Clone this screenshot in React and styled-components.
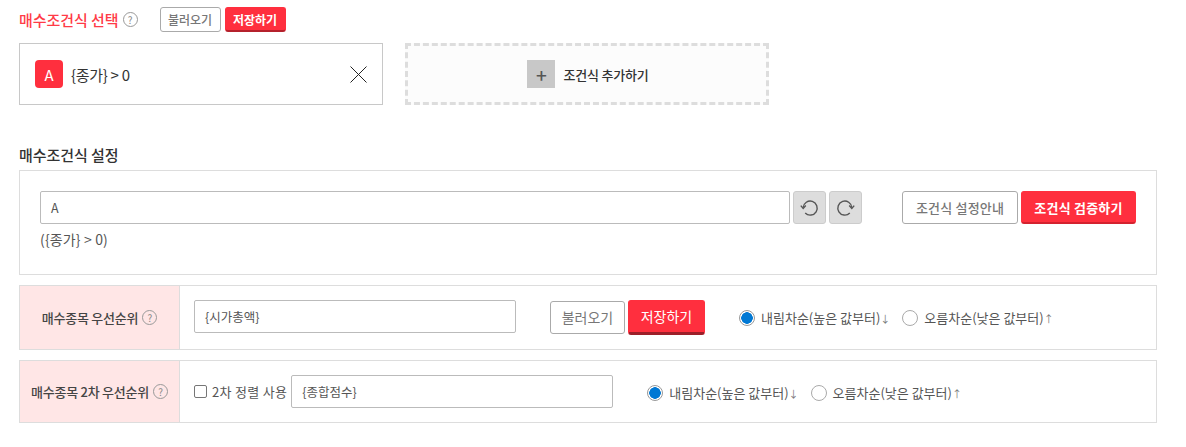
import React from 'react';
import styled, { createGlobalStyle } from 'styled-components';

const GlobalStyle = createGlobalStyle`
  html, body {
    margin: 0;
    padding: 0;
    background: #fff;
  }
  body {
    font-family: "Noto Sans CJK KR", "Noto Sans", sans-serif;
    color: #333;
  }
  * { box-sizing: border-box; }
`;

const Page = styled.div`
  width: 1186px;
  height: 447px;
  padding: 7px 29px 0 19px;
  overflow: hidden;
`;

const TitleRow = styled.div`
  display: flex;
  align-items: center;
  height: 25px;
`;

const Title = styled.h2`
  margin: 0;
  font-size: 15px;
  line-height: 22px;
  font-weight: 500;
  letter-spacing: -0.05px;
  color: ${(p) => p.color || '#333'};
`;

const HelpMark = styled.span`
  display: inline-flex;
  align-items: center;
  justify-content: center;
  width: 15px;
  height: 15px;
  margin-left: ${(p) => p.gap || 4}px;
  border: 1px solid #999;
  border-radius: 50%;
  font-size: 10px;
  line-height: 1;
  font-weight: 400;
  color: #888;
  flex: none;
`;

const SmallButtons = styled.div`
  display: flex;
  gap: 4px;
  margin-left: 22px;
`;

const Button = styled.button`
  display: flex;
  align-items: center;
  justify-content: center;
  flex: none;
  width: ${(p) => p.w}px;
  height: ${(p) => p.h}px;
  padding: 0;
  border-radius: 3px;
  font-family: inherit;
  font-size: ${(p) => p.size || 12}px;
  font-weight: ${(p) => p.weight || 500};
  letter-spacing: ${(p) => p.spacing || 0}px;
  color: ${(p) => (p.primary ? '#fff' : '#777')};
  background: ${(p) => (p.primary ? '#ff2f3e' : '#fff')};
  border: 1px solid ${(p) => (p.primary ? '#ff2f3e' : '#aaa')};
  border-bottom: ${(p) => (p.primary ? `${p.lip || 2}px solid ${p.shade || '#b5212c'}` : '1px solid #aaa')};
`;

const CardRow = styled.div`
  display: flex;
  gap: 22px;
  margin-top: 11px;
`;

const ConditionCard = styled.div`
  display: flex;
  align-items: center;
  width: 364px;
  height: 62px;
  padding: 0 15px;
  border: 1px solid #c8c8c8;
`;

const LetterBadge = styled.span`
  display: flex;
  align-items: center;
  justify-content: center;
  width: 28px;
  height: 28px;
  border-radius: 4px;
  background: #ff2f3e;
  color: #fff;
  font-size: 15px;
  font-weight: 400;
`;

const ConditionText = styled.span`
  margin-left: 8px;
  font-size: 15px;
  letter-spacing: -0.3px;
  color: #333;
`;

const CloseIcon = styled.svg`
  margin-left: auto;
  width: 17px;
  height: 17px;
`;

const AddCard = styled.div`
  display: flex;
  align-items: center;
  justify-content: center;
  gap: 8px;
  width: 364px;
  height: 62px;
  padding-left: 2px;
  border: 3px dashed #ddd;
  background: #fcfcfc;
`;

const PlusBox = styled.span`
  display: flex;
  align-items: center;
  justify-content: center;
  width: 28px;
  height: 28px;
  background: #c8c8c8;
  color: #555;
  font-size: 19px;
  font-weight: 500;
  line-height: 1;
`;

const AddLabel = styled.span`
  font-size: 13px;
  font-weight: 500;
  letter-spacing: -0.2px;
  color: #333;
`;

const SectionTitle = styled(Title)`
  margin-top: 39px;
`;

const FormulaPanel = styled.div`
  width: 1138px;
  height: 105px;
  margin-top: 4px;
  padding: 20px 20px 0;
  border: 1px solid #ddd;
`;

const FormulaRow = styled.div`
  display: flex;
  align-items: flex-start;
`;

const TextBox = styled.div`
  display: flex;
  align-items: center;
  flex: none;
  width: ${(p) => p.w}px;
  height: 33px;
  padding: 0 10px;
  border: 1px solid #bbb;
  border-radius: 2px;
  font-size: 12.5px;
  color: #555;
  background: #fff;
`;

const IconButton = styled.button`
  display: flex;
  align-items: center;
  justify-content: center;
  width: 33px;
  height: 33px;
  margin-left: 3px;
  padding: 0;
  border: 1px solid #ccc;
  border-radius: 3px;
  background: #ddd;
  flex: none;
`;

const RightButtons = styled.div`
  display: flex;
  gap: 3px;
  margin-left: 40px;
`;

const Preview = styled.div`
  margin-top: 5px;
  font-size: 14px;
  line-height: 20px;
  letter-spacing: 0.15px;
  color: #555;
`;

const OptionRow = styled.div`
  display: flex;
  width: 1138px;
  height: ${(p) => p.h}px;
  margin-top: 10px;
  border: 1px solid #ddd;
`;

const OptionLabel = styled.div`
  display: flex;
  align-items: center;
  justify-content: center;
  width: 160px;
  flex: none;
  background: #ffe6e6;
  border-right: 1px solid #ddd;
  font-size: 13px;
  font-weight: 500;
  letter-spacing: -0.25px;
  color: #444;
  white-space: nowrap;
`;

const OptionBody = styled.div`
  display: flex;
  align-items: center;
  flex: 1;
  padding-left: 14px;
  padding-bottom: ${(p) => p.lift || 0}px;
`;

const ButtonPair = styled.div`
  display: flex;
  align-items: center;
  gap: 3px;
  margin-left: 34px;
  margin-top: 1px;
`;

const SortGroup = styled.div`
  display: flex;
  align-items: center;
  margin-left: ${(p) => p.left}px;
  margin-top: 2px;
`;

const Radio = styled.span`
  display: inline-block;
  width: 16px;
  height: 16px;
  border-radius: 50%;
  flex: none;
  border: 1px solid ${(p) => (p.checked ? '#999' : '#aaa')};
  background: ${(p) => (p.checked ? 'radial-gradient(circle, #0078d4 0 5.5px, #fff 6px)' : '#fff')};
`;

const RadioText = styled.span`
  margin-left: 6px;
  margin-right: 14px;
  font-size: 13px;
  letter-spacing: 0px;
  color: #555;
  white-space: nowrap;
`;

const Arrow = styled.span`
  font-size: 10px;
  letter-spacing: -2px;
  color: #777;
`;

const CheckBox = styled.span`
  display: inline-block;
  width: 13px;
  height: 13px;
  flex: none;
  border: 1px solid #767676;
  border-radius: 2px;
  background: #fff;
`;

const CheckText = styled.span`
  margin-left: 5px;
  margin-right: 4px;
  font-size: 13px;
  letter-spacing: 0.3px;
  color: #555;
  white-space: nowrap;
`;

const RotateIcon = ({ flip }) => (
  <svg width="19" height="19" viewBox="0 0 19 19" fill="none" stroke="#555" strokeWidth="1.4" style={flip ? { transform: 'scaleX(-1)' } : undefined}>
    <path d="M3.2 9.5A7 7 0 1 1 5.2 15" />
    <path d="M0.8 7.6L3.2 10.4L5.8 7.6" />
  </svg>
);

const SortOptions = ({ left }) => (
  <SortGroup left={left}>
    <Radio checked />
    <RadioText>내림차순(높은 값부터)<Arrow>↓</Arrow></RadioText>
    <Radio />
    <RadioText>오름차순(낮은 값부터)<Arrow>↑</Arrow></RadioText>
  </SortGroup>
);

const App = () => (
  <Page>
    <GlobalStyle />
    <TitleRow>
      <Title color="#ff3b47">매수조건식 선택</Title>
      <HelpMark>?</HelpMark>
      <SmallButtons>
        <Button w={61} h={25}>불러오기</Button>
        <Button w={61} h={25} primary weight={700}>저장하기</Button>
      </SmallButtons>
    </TitleRow>
    <CardRow>
      <ConditionCard>
        <LetterBadge>A</LetterBadge>
        <ConditionText>{'{종가} > 0'}</ConditionText>
        <CloseIcon viewBox="0 0 17 17" fill="none" stroke="#222" strokeWidth="1">
          <path d="M0.5 0.5L16.5 16.5M16.5 0.5L0.5 16.5" />
        </CloseIcon>
      </ConditionCard>
      <AddCard>
        <PlusBox>+</PlusBox>
        <AddLabel>조건식 추가하기</AddLabel>
      </AddCard>
    </CardRow>
    <SectionTitle>매수조건식 설정</SectionTitle>
    <FormulaPanel>
      <FormulaRow>
        <TextBox w={750}>A</TextBox>
        <IconButton><RotateIcon /></IconButton>
        <IconButton><RotateIcon flip /></IconButton>
        <RightButtons>
          <Button w={116} h={33} size={13} spacing={0.2}>조건식 설정안내</Button>
          <Button w={115} h={33} size={13} spacing={0.2} primary weight={700} shade="#d4222f">조건식 검증하기</Button>
        </RightButtons>
      </FormulaRow>
      <Preview>{'({종가} > 0)'}</Preview>
    </FormulaPanel>
    <OptionRow h={65}>
      <OptionLabel>
        매수종목 우선순위<HelpMark>?</HelpMark>
      </OptionLabel>
      <OptionBody lift={2}>
        <TextBox w={322}>{'{시가총액}'}</TextBox>
        <ButtonPair>
          <Button w={75} h={33} size={14} weight={400}>불러오기</Button>
          <Button w={77} h={35} size={14} weight={400} primary lip={3} shade="#9c1f29">저장하기</Button>
        </ButtonPair>
        <SortOptions left={34} />
      </OptionBody>
    </OptionRow>
    <OptionRow h={63}>
      <OptionLabel>
        매수종목 2차 우선순위<HelpMark>?</HelpMark>
      </OptionLabel>
      <OptionBody>
        <CheckBox />
        <CheckText>2차 정렬 사용</CheckText>
        <TextBox w={322}>{'{종합점수}'}</TextBox>
        <SortOptions left={34} />
      </OptionBody>
    </OptionRow>
  </Page>
);

export default App;
